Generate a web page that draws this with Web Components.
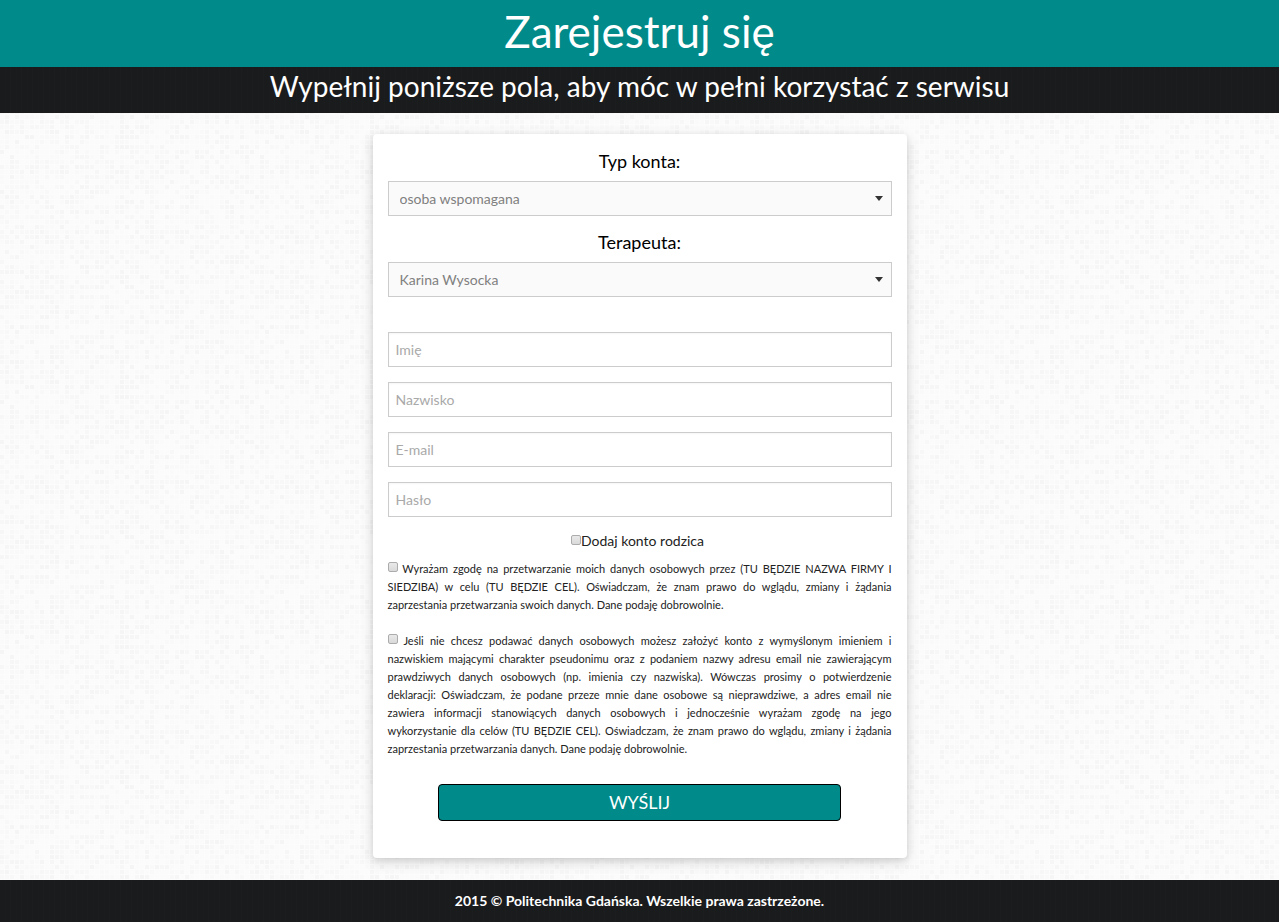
<!DOCTYPE html>
<html lang="pl">
<head>
<meta charset="utf-8">
<meta name="viewport" content="width=device-width, initial-scale=1">
<title>Zarejestruj się</title>
<style>
  body { margin: 0; font-family: Lato, "Open Sans", sans-serif; color: #111; }
</style>
</head>
<body>
<register-page>
  <page-title slot="header">Zarejestruj się</page-title>
  <page-subtitle slot="header">Wypełnij poniższe pola, aby móc w pełni korzystać z serwisu</page-subtitle>
  <register-card>
    <select-field label="Typ konta:" options="osoba wspomagana|terapeuta"></select-field>
    <select-field label="Terapeuta:" options="Karina Wysocka"></select-field>
    <text-fields>
      <text-field label="Imię"></text-field>
      <text-field label="Nazwisko"></text-field>
      <text-field label="E-mail" type="email"></text-field>
      <text-field label="Hasło" type="password"></text-field>
    </text-fields>
    <check-field variant="parent">Dodaj konto rodzica</check-field>
    <check-field> Wyrażam zgodę na przetwarzanie moich danych osobowych przez (TU BĘDZIE NAZWA FIRMY I SIEDZIBA) w celu (TU BĘDZIE CEL). Oświadczam, że znam prawo do wglądu, zmiany i żądania zaprzestania przetwarzania swoich danych. Dane podaję dobrowolnie.</check-field>
    <check-field> Jeśli nie chcesz podawać danych osobowych możesz założyć konto z wymyślonym imieniem i nazwiskiem mającymi charakter pseudonimu oraz z podaniem nazwy adresu email nie zawierającym prawdziwych danych osobowych (np. imienia czy nazwiska). Wówczas prosimy o potwierdzenie deklaracji: Oświadczam, że podane przeze mnie dane osobowe są nieprawdziwe, a adres email nie zawiera informacji stanowiących danych osobowych i jednocześnie wyrażam zgodę na jego wykorzystanie dla celów (TU BĘDZIE CEL). Oświadczam, że znam prawo do wglądu, zmiany i żądania zaprzestania przetwarzania danych. Dane podaję dobrowolnie.</check-field>
    <submit-button>WYŚLIJ</submit-button>
  </register-card>
  <page-footer slot="footer">2015 © Politechnika Gdańska. Wszelkie prawa zastrzeżone.</page-footer>
</register-page>

<script>
const define = (name, html, setup) => customElements.define(name, class extends HTMLElement {
  constructor() {
    super();
    this.attachShadow({ mode: "open" }).innerHTML = html;
  }
  connectedCallback() {
    if (setup) setup(this, this.shadowRoot);
  }
});

// Woven paper texture: a seeded mosaic of pale grey squares.
const mosaic = () => {
  const cells = 50, pitch = 5, size = cells * pitch;
  let seed = 7, out = "";
  const random = () => (seed = (seed * 16807) % 2147483647) / 2147483647;
  for (let y = 0; y < cells; y++) for (let x = 0; x < cells; x++) {
    const v = 251 - Math.floor(Math.pow(random(), 2) * 7);
    out += `<rect x='${x * pitch}' y='${y * pitch}' width='4' height='4' fill='rgb(${v},${v},${v})'/>`;
  }
  const svg = `<svg xmlns='http://www.w3.org/2000/svg' width='${size}' height='${size}' shape-rendering='crispEdges'><rect width='100%' height='100%' fill='#fcfcfc'/>${out}</svg>`;
  return `url("data:image/svg+xml,${encodeURIComponent(svg)}")`;
};

const darkCloth = "background: repeating-linear-gradient(90deg, #1a1b1c 0 5px, #1b1c1d 5px 6px, #1a1b1c 6px 10px, #1c1d1e 10px 11px);";

define("register-page", `
  <style>
    :host { display: flex; flex-direction: column; min-height: 100vh; background: #fafafa var(--texture); }
    main { flex: 1; padding: 21px 0 22px; }
  </style>
  <header><slot name="header"></slot></header>
  <main><slot></slot></main>
  <slot name="footer"></slot>`,
  host => host.style.setProperty("--texture", mosaic()));

define("page-title", `
  <style>
    :host { display: block; background: #008b8a; color: #fff; text-align: center; }
    h1 { margin: 0; padding: 0 0 5px; font-size: 44px; line-height: 62px; font-weight: 400; }
  </style>
  <h1><slot></slot></h1>`);

define("page-subtitle", `
  <style>
    :host { display: block; ${darkCloth} color: #fff; text-align: center; }
    h2 { margin: 0; padding: 0 0 8px; font-size: 28px; line-height: 38px; font-weight: 400; }
  </style>
  <h2><slot></slot></h2>`);

define("register-card", `
  <style>
    :host { display: block; box-sizing: border-box; width: 100%; max-width: 534px; margin: 0 auto; padding: 15px 15px 37px;
      background: #fff; border-radius: 4px; box-shadow: 0 4px 14px rgba(0,0,0,.14), 0 2px 6px rgba(0,0,0,.08); }
    form { margin: 0; }
  </style>
  <form><slot></slot></form>`);

define("select-field", `
  <style>
    :host { display: block; margin-bottom: 14px; }
    label { display: block; margin-bottom: 8px; font-size: 18px; line-height: 24px; text-align: center; color: #000; }
    select { appearance: none; display: block; box-sizing: border-box; width: 100%; height: 35px; margin: 0; padding: 0 24px 0 11px;
      border: 1px solid #ccc; border-radius: 0; font: 400 14px/20px Lato, sans-serif; color: #808080;
      background: #fafafa url("data:image/svg+xml,%3Csvg xmlns='http://www.w3.org/2000/svg' width='8' height='5'%3E%3Cpath d='M0 0h8L4 5z' fill='%23333'/%3E%3C/svg%3E") no-repeat right 8px top 14px; }
  </style>
  <label for="control"></label>
  <select id="control"></select>`,
  (host, root) => {
    root.querySelector("label").textContent = host.getAttribute("label");
    root.querySelector("select").replaceChildren(...host.getAttribute("options").split("|").map(t => new Option(t)));
  });

define("text-fields", `
  <style>
    :host { display: grid; gap: 15px; margin-top: 35px; }
  </style>
  <slot></slot>`);

define("text-field", `
  <style>
    :host { display: block; }
    input { display: block; box-sizing: border-box; width: 100%; height: 35px; margin: 0; padding: 0 7px;
      border: 1px solid #ccc; border-radius: 0; background: #fff; box-shadow: inset 0 1px 2px rgba(0,0,0,.04);
      font: 400 14px/20px Lato, sans-serif; color: #444; }
    input::placeholder { color: #a9a9a9; opacity: 1; }
  </style>
  <input>`,
  (host, root) => {
    const input = root.querySelector("input");
    input.type = host.getAttribute("type") || "text";
    input.placeholder = host.getAttribute("label");
    input.setAttribute("aria-label", host.getAttribute("label"));
  });

define("check-field", `
  <style>
    :host { display: block; margin-bottom: 18px; font-size: 11px; line-height: 18px; color: #222; text-align: justify; }
    :host([variant="parent"]) { margin: 14px 4px 9px 0; font-size: 14px; line-height: 20px; text-align: center; }
    input { appearance: none; box-sizing: border-box; width: 10px; height: 10px; margin: 0; vertical-align: 1px;
      border: 1px solid #acacac; border-radius: 2px; background: linear-gradient(#e9e9e9, #d9d9d9); }
    input:checked { background: #008b8a; }
  </style>
  <label><input type="checkbox"><slot></slot></label>`);

define("submit-button", `
  <style>
    :host { display: block; margin-top: 26px; }
    button { display: block; width: 80%; height: 37px; margin: 0 auto; padding: 0 0 2px; border: 1px solid #000; border-radius: 4px;
      background: #008b8a; color: #fff; font: 400 18px/24px Lato, sans-serif; cursor: pointer; }
  </style>
  <button type="submit"><slot></slot></button>`);

define("page-footer", `
  <style>
    :host { display: block; ${darkCloth} color: #fff; text-align: center; }
    footer { padding: 11px 0; font-size: 14px; line-height: 20px; font-weight: 700; }
  </style>
  <footer><slot></slot></footer>`);
</script>
</body>
</html>
